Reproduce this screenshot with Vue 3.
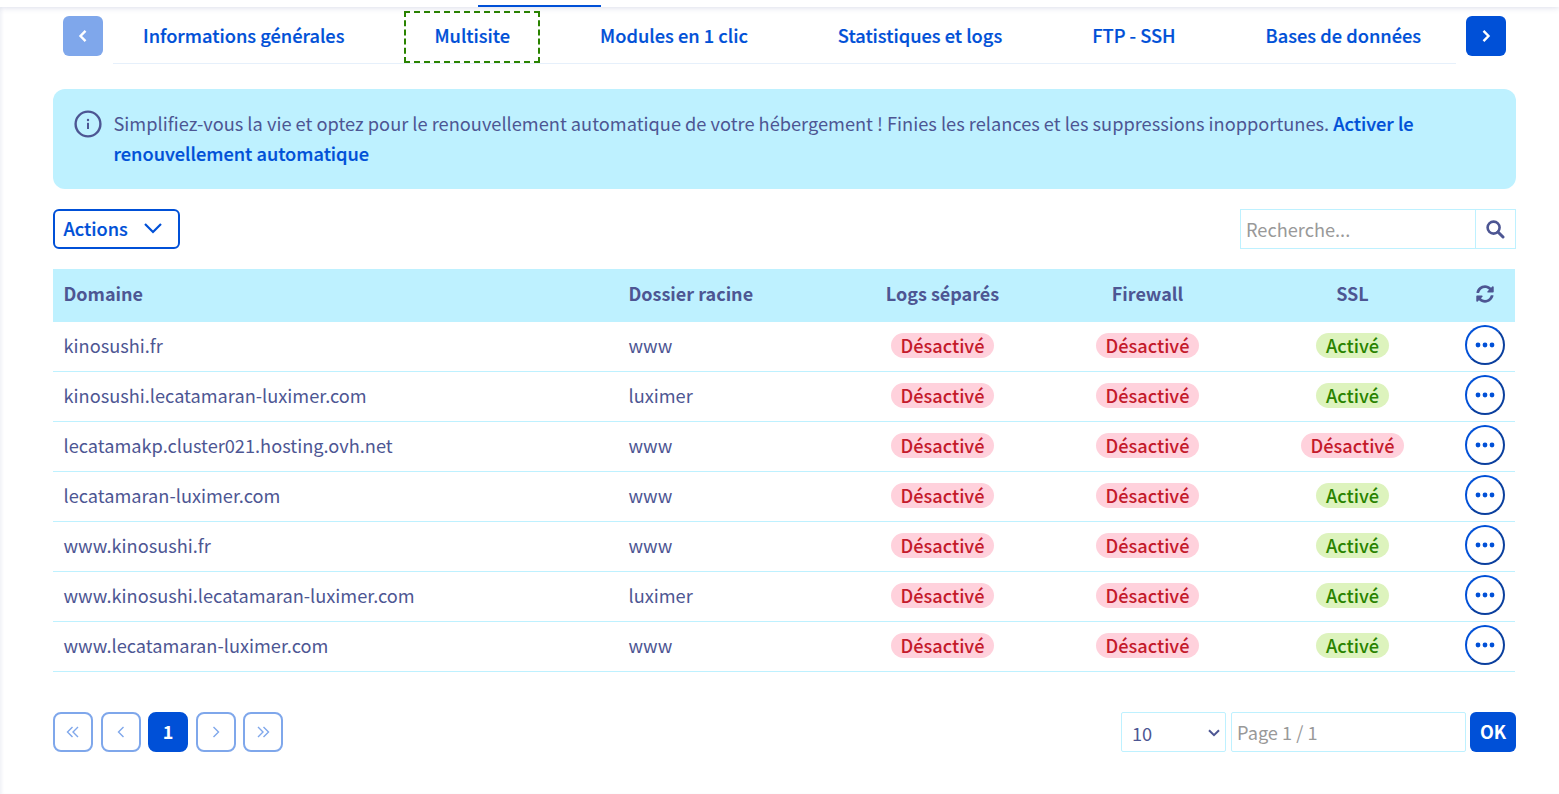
<script setup>
const tabs = [
  { label: 'Informations générales' },
  { label: 'Multisite', focus: true },
  { label: 'Modules en 1 clic' },
  { label: 'Statistiques et logs' },
  { label: 'FTP - SSH' },
  { label: 'Bases de données' },
]
const rows = [
  ['kinosushi.fr', 'www', true],
  ['kinosushi.lecatamaran-luximer.com', 'luximer', true],
  ['lecatamakp.cluster021.hosting.ovh.net', 'www', false],
  ['lecatamaran-luximer.com', 'www', true],
  ['www.kinosushi.fr', 'www', true],
  ['www.kinosushi.lecatamaran-luximer.com', 'luximer', true],
  ['www.lecatamaran-luximer.com', 'www', true],
]
</script>

<template>
  <div class="page">
    <div class="topbar"><span class="topline"></span></div>
    <main class="main">
      <div class="tabs-row">
        <button class="nav-btn disabled">
          <svg width="14" height="14" viewBox="0 0 14 14"><path d="M9.500 1.800 4.500 7l5 5.200" class="chev" /></svg>
        </button>
        <div class="tabs">
          <a v-for="t in tabs" :key="t.label" class="tab" :class="{ focus: t.focus }">{{ t.label }}</a>
        </div>
        <button class="nav-btn">
          <svg width="14" height="14" viewBox="0 0 14 14"><path d="M4.500 1.800 9.500 7l-5 5.200" class="chev" /></svg>
        </button>
      </div>

      <div class="banner">
        <svg class="info" width="28" height="28" viewBox="0 0 28 28">
          <circle cx="14" cy="14" r="12.400" fill="none" stroke="#4d5693" stroke-width="2.400" />
          <rect x="13" y="12.800" width="2" height="6.200" fill="#4d5693" />
          <circle cx="14" cy="10" r="1.200" fill="#4d5693" />
        </svg>
        <p class="banner-text">Simplifiez-vous la vie et optez pour le renouvellement automatique de votre hébergement ! Finies les relances et les suppressions inopportunes. <a class="strong-link">Activer le renouvellement automatique</a></p>
      </div>

      <div class="toolbar">
        <button class="actions">
          <span class="actions-label">Actions</span>
          <svg width="20" height="12" viewBox="0 0 20 12"><path d="M2 2l8 8 8-8" fill="none" stroke="#0050d7" stroke-width="2.200" /></svg>
        </button>
        <div class="search">
          <input class="search-input" placeholder="Recherche..." />
          <button class="search-btn">
            <svg width="20" height="20" viewBox="0 0 20 20"><circle cx="8.600" cy="8.600" r="6" fill="none" stroke="#4d5693" stroke-width="2.600" /><path d="M13 13l5 5" stroke="#4d5693" stroke-width="3" stroke-linecap="round" /></svg>
          </button>
        </div>
      </div>

      <table class="table">
        <colgroup>
          <col class="c1" /><col class="c2" /><col class="c3" /><col class="c3" /><col class="c3" /><col />
        </colgroup>
        <thead>
          <tr>
            <th>Domaine</th>
            <th>Dossier racine</th>
            <th class="center">Logs séparés</th>
            <th class="center">Firewall</th>
            <th class="center">SSL</th>
            <th class="center refresh-cell">
              <svg class="refresh" width="18" height="18" viewBox="0 0 512 512"><path fill="#4d5693" d="M370.72 133.28C339.458 104.008 298.888 87.962 255.848 88c-77.458.068-144.328 53.178-162.791 126.85-1.344 5.363-6.122 9.15-11.651 9.15H24.103c-7.498 0-13.194-6.807-11.807-14.176C33.933 94.924 134.813 8 256 8c66.448 0 126.791 26.136 171.315 68.685L463.03 40.97C478.149 25.851 504 36.559 504 57.941V192c0 13.255-10.745 24-24 24H345.941c-21.382 0-32.09-25.851-16.971-40.971l41.75-41.749zM32 296h134.059c21.382 0 32.09 25.851 16.971 40.971l-41.75 41.75c31.262 29.273 71.835 45.319 114.876 45.28 77.418-.07 144.315-53.144 162.787-126.849 1.344-5.363 6.122-9.15 11.651-9.15h57.304c7.498 0 13.194 6.807 11.807 14.176C478.067 417.076 377.187 504 256 504c-66.448 0-126.791-26.136-171.315-68.685L48.97 471.03C33.851 486.149 8 475.441 8 454.059V320c0-13.255 10.745-24 24-24z"/></svg>
            </th>
          </tr>
        </thead>
        <tbody>
          <tr v-for="r in rows" :key="r[0]">
            <td>{{ r[0] }}</td>
            <td>{{ r[1] }}</td>
            <td class="center badge-cell"><span class="badge off">Désactivé</span></td>
            <td class="center badge-cell"><span class="badge off">Désactivé</span></td>
            <td class="center badge-cell">
              <span class="badge" :class="r[2] ? 'on' : 'off'">{{ r[2] ? 'Activé' : 'Désactivé' }}</span>
            </td>
            <td class="center">
              <button class="more">
                <svg width="20" height="6" viewBox="0 0 20 6"><circle cx="3" cy="3" r="2.400" /><circle cx="10" cy="3" r="2.400" /><circle cx="17" cy="3" r="2.400" /></svg>
              </button>
            </td>
          </tr>
        </tbody>
      </table>

      <div class="footer">
        <div class="pager">
          <button class="pg"><svg width="14" height="14" viewBox="0 0 14 14"><path d="M6.500 2 1.500 7l5 5M12 2 7 7l5 5" class="pchev" /></svg></button>
          <button class="pg"><svg width="14" height="14" viewBox="0 0 14 14"><path d="M9.500 2l-5 5 5 5" class="pchev" /></svg></button>
          <button class="pg current">1</button>
          <button class="pg"><svg width="14" height="14" viewBox="0 0 14 14"><path d="M4.500 2l5 5-5 5" class="pchev" /></svg></button>
          <button class="pg"><svg width="14" height="14" viewBox="0 0 14 14"><path d="M2 2l5 5-5 5M7.500 2l5 5-5 5" class="pchev" /></svg></button>
        </div>
        <div class="pagesize">
          <div class="size-wrap">
            <select class="size"><option>10</option></select>
            <svg class="size-arrow" width="12" height="8" viewBox="0 0 12 8"><path d="M1 1.200l5 5 5-5" fill="none" stroke="#4d5693" stroke-width="2" /></svg>
          </div>
          <input class="page-input" placeholder="Page 1 / 1" />
          <button class="ok">OK</button>
        </div>
      </div>
    </main>
  </div>
</template>

<style>
html, body { margin: 0; background: #fff; }
</style>

<style scoped>
.page {
  height: 794px;
  overflow: hidden;
  font-family: "Noto Sans CJK SC", "Noto Sans", sans-serif;
  font-size: 18.2px;
  color: #4d5693;
  background: #fff;
  box-shadow: inset 3px 0 3px -1px rgba(77, 86, 147, 0.08);
}
button, input, select { font-family: inherit; box-sizing: border-box; }
.topbar {
  height: 7px;
  background: #fff;
  box-shadow: 0 0 6px rgba(77, 86, 147, 0.25);
  position: relative;
  display: flex;
  align-items: flex-end;
}
.topline { display: block; margin-left: 478px; width: 123px; height: 2px; background: #0050d7; }
.main { padding: 4px 43px 0 53px; }
.tabs-row { display: flex; padding: 0 10px; height: 53px; }
.nav-btn {
  width: 40px; height: 40px; margin-top: 5px; border: 0; border-radius: 6px;
  background: #0050d7; display: flex; align-items: center; justify-content: center; padding: 0; flex: none;
}
.nav-btn.disabled { background: #7fa7eb; }
.chev { fill: none; stroke: #fff; stroke-width: 2.400; }
.tabs {
  flex: 1; min-width: 0; margin: 0 10px; display: flex; gap: 30px; border-bottom: 1px solid #e6f0fb; height: 52px;
}
.tab {
  display: flex; align-items: center; height: 52px; padding: 0 30px 4px; box-sizing: border-box;
  color: #0050d7; font-weight: 500; font-size: 18.25px; white-space: nowrap;
  -webkit-text-stroke: 0.2px #0050d7;
}
.tab.focus { outline: 2px dashed #2a8300; outline-offset: -2px; }
.banner {
  margin-top: 25px; height: 100px; box-sizing: border-box; background: #bef1ff; border-radius: 12px;
  padding: 19px 100px 20px 60.500px; position: relative;
}
.info { position: absolute; left: 21px; top: 21px; }
.banner-text { margin: 0; line-height: 30px; font-size: 18.23px; color: #4d5693; }
.strong-link { color: #0050d7; font-weight: 500; -webkit-text-stroke: 0.2px #0050d7; }
.toolbar { margin-top: 20px; display: flex; justify-content: space-between; height: 40px; }
.actions {
  width: 127px; height: 40px; border: 2px solid #0050d7; border-radius: 6px; background: #fff; color: #0050d7;
  font-size: 18.2px; font-weight: 500; display: flex; align-items: center; justify-content: space-between; padding: 0 15px 2px 8.500px;
  -webkit-text-stroke: 0.2px #0050d7;
}
.search { display: flex; width: 276px; height: 40px; box-sizing: border-box; border: 1px solid #bef1ff; }
.search-input {
  flex: 1; min-width: 0; border: 0; outline: 0; padding: 0 5px; font-size: 18.2px; color: #4d5693; background: #fff;
}
.search-input::placeholder, .page-input::placeholder { color: #999; opacity: 1; }
.search-btn {
  width: 40px; border: 0; border-left: 1px solid #bef1ff; background: #fff; padding: 0 2px 0 0;
  display: flex; align-items: center; justify-content: center;
}
.table { margin-top: 20px; width: 1462px; border-collapse: separate; border-spacing: 0; table-layout: fixed; }
.c1 { width: 565px; }
.c2 { width: 222px; }
.c3 { width: 205px; }
th {
  height: 53px; box-sizing: border-box; padding: 0 11px 6px 10.500px; background: #bef1ff; text-align: left; font-weight: 700; font-size: 18px; color: #4d5693;
}
td {
  height: 50px; box-sizing: border-box; padding: 0 11px 3px 10.500px; border-bottom: 1px solid #bef1ff; color: #4d5693;
}
th.center { text-align: center; padding: 0 0 6px; }
td.center { text-align: center; padding: 0 0 3px; }
td.badge-cell { padding-bottom: 5px; }
th.refresh-cell { padding: 0 0 4px; }
.refresh { display: block; margin: 0 auto; }
.badge {
  display: inline-block; height: 25px; line-height: 24px; padding: 0 10px; border-radius: 13px; font-weight: 500;
  vertical-align: middle;
}
.badge.off { background: #ffd1dc; color: #c41a2b; }
.badge.on { background: #ddf3bd; color: #2a8300; }
.more {
  width: 40px; height: 40px; padding: 0; border-radius: 50%; background: #fff; display: inline-flex;
  align-items: center; justify-content: center; vertical-align: middle;
  border: 2px solid; border-color: #0050d7 #0a3f9e #0a3f9e #0050d7;
}
.more circle { fill: #0050d7; }
.footer { margin-top: 40px; display: flex; justify-content: space-between; }
.pager { display: flex; gap: 7.500px; }
.pg {
  width: 40px; height: 40px; padding: 0; border: 2px solid #7fa7eb; border-radius: 8px; background: #fff;
  display: flex; align-items: center; justify-content: center;
}
.pchev { fill: none; stroke: #7fa7eb; stroke-width: 1.400; }
.pg.current { background: #0050d7; border-color: #0050d7; color: #fff; font-weight: 700; font-size: 18px; padding-bottom: 2px; }
.pagesize { display: flex; height: 40px; }
.size-wrap { position: relative; width: 105px; height: 40px; }
.size {
  appearance: none; width: 105px; height: 40px; border: 1px solid #bef1ff; border-radius: 2px; background: #fff; color: #4d5693;
  font-size: 18.2px; padding: 2px 10px 0; outline: 0;
}
.size-arrow { position: absolute; right: 6px; top: 17px; pointer-events: none; }
.page-input {
  width: 235px; height: 40px; margin-left: 5px; border: 1px solid #bef1ff; border-radius: 2px; outline: 0;
  padding: 0 5px; font-size: 18.2px; color: #4d5693;
}
.ok {
  width: 46px; height: 40px; margin-left: 4px; border: 0; border-radius: 6px; background: #0050d7; color: #fff;
  font-weight: 700; font-size: 18px; padding: 0 0 2px;
}
</style>
